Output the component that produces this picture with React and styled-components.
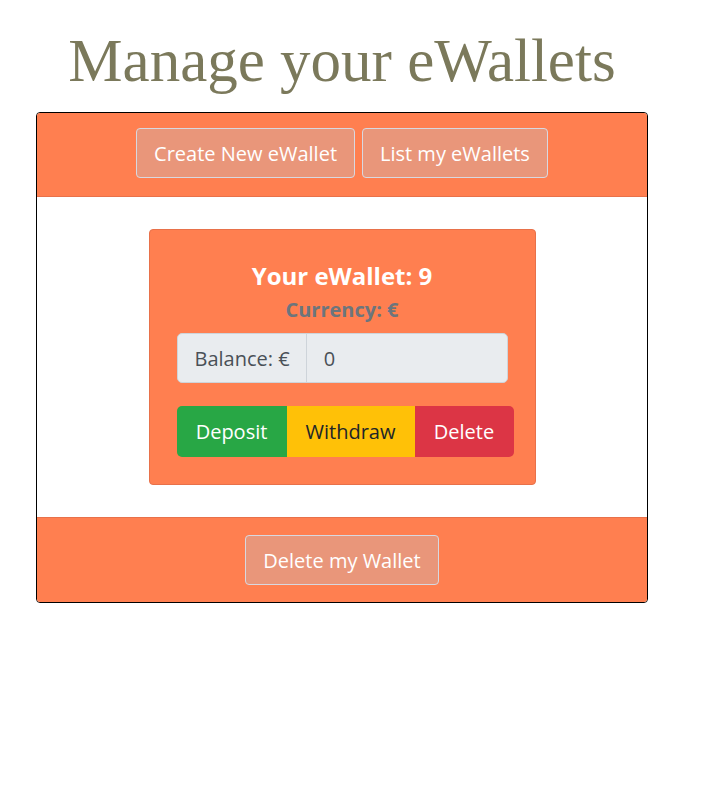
import styled, { createGlobalStyle } from "styled-components";

const GlobalStyle = createGlobalStyle`
  body {
    margin: 0;
    background: #fff;
    font-family: "Open Sans", "Noto Sans", sans-serif;
  }
`;

const Page = styled.div`
  width: 717px;
  padding-left: 36px;
  box-sizing: border-box;
`;

const Title = styled.h1`
  width: 612px;
  margin: 0;
  padding-top: 24px;
  font-family: "Liberation Serif", serif;
  font-weight: normal;
  font-size: 61px;
  line-height: 74px;
  color: #7b795b;
  text-align: center;
`;

const Card = styled.div`
  width: 612px;
  margin-top: 14px;
  box-sizing: border-box;
  border: 1px solid #000;
  border-radius: 4px;
  overflow: hidden;
`;

const Bar = styled.div`
  background: #ff7f50;
  display: flex;
  justify-content: center;
  gap: 7px;
  padding: ${(p) => (p.$bottom ? "17px 0 17px" : "15px 0 18px")};
  border-${(p) => (p.$bottom ? "top" : "bottom")}: 1px solid #e8714a;
`;

const SalmonButton = styled.button`
  font-family: inherit;
  font-size: 20px;
  line-height: 30px;
  height: 50px;
  padding: 1px 17px 0;
  color: #fff;
  background: #e9967a;
  border: 1px solid #d8d8e0;
  border-radius: 4px;
`;

const Body = styled.div`
  background: #fff;
  display: flex;
  justify-content: center;
  padding: 32px 0 32px;
`;

const Wallet = styled.div`
  width: 387px;
  box-sizing: border-box;
  background: #ff7f50;
  border: 1px solid #e8714a;
  border-radius: 4px;
  padding: 31px 27px 27px;
  text-align: center;
`;

const WalletName = styled.h4`
  margin: 0 0 8px;
  font-size: 24px;
  line-height: 29px;
  font-weight: 700;
  color: #fff;
`;

const Currency = styled.h5`
  margin: 0 0 11px;
  font-size: 20px;
  line-height: 24px;
  font-weight: 700;
  color: #6c757d;
`;

const InputGroup = styled.div`
  display: flex;
  width: 331px;
  height: 50px;
  box-sizing: border-box;
  border: 1px solid #ced4da;
  border-radius: 5px;
  background: #e9ecef;
  overflow: hidden;
`;

const Prepend = styled.span`
  display: flex;
  align-items: center;
  padding: 0 16px 0 17px;
  font-size: 20px;
  color: #495057;
  border-right: 1px solid #ced4da;
`;

const Amount = styled.input`
  flex: 1;
  min-width: 0;
  border: 0;
  background: transparent;
  padding: 0 17px;
  font-family: inherit;
  font-size: 20px;
  color: #495057;
`;

const ButtonGroup = styled.div`
  display: flex;
  margin-top: 23px;
  width: 337px;
  height: 51px;
  border-radius: 5px;
  overflow: hidden;
`;

const ActionButton = styled.button`
  font-family: inherit;
  font-size: 20px;
  border: 0;
  padding: 0;
  width: ${(p) => p.$w}px;
  background: ${(p) => p.$bg};
  color: ${(p) => p.$fg};
`;

export default function App() {
  return (
    <>
      <GlobalStyle />
      <Page>
        <Title>Manage your eWallets</Title>
        <Card>
          <Bar>
            <SalmonButton>Create New eWallet</SalmonButton>
            <SalmonButton>List my eWallets</SalmonButton>
          </Bar>
          <Body>
            <Wallet>
              <WalletName>Your eWallet: 9</WalletName>
              <Currency>Currency: €</Currency>
              <InputGroup>
                <Prepend>Balance: €</Prepend>
                <Amount readOnly value="0" />
              </InputGroup>
              <ButtonGroup>
                <ActionButton $w={110} $bg="#28a745" $fg="#fff">Deposit</ActionButton>
                <ActionButton $w={128} $bg="#ffc107" $fg="#212529">Withdraw</ActionButton>
                <ActionButton $w={99} $bg="#dc3545" $fg="#fff">Delete</ActionButton>
              </ButtonGroup>
            </Wallet>
          </Body>
          <Bar $bottom>
            <SalmonButton>Delete my Wallet</SalmonButton>
          </Bar>
        </Card>
      </Page>
    </>
  );
}
